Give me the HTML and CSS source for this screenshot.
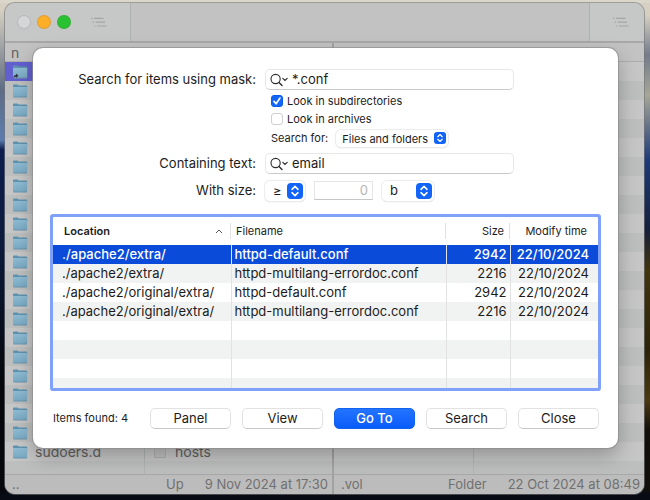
FILE: index.html
```html
<!DOCTYPE html>
<html lang="en">
<head>
<meta charset="utf-8">
<title>Find files</title>
<link rel="stylesheet" href="styles.css">
</head>
<body>
<svg class="defs" aria-hidden="true">
  <defs>
    <linearGradient id="fold" x1="0" y1="0" x2="0" y2="1"><stop offset="0" stop-color="#8fbcd3"/><stop offset="1" stop-color="#78a9c3"/></linearGradient>
    <symbol id="folder" viewBox="0 0 16 14">
      <path d="M1 1.2Q1 .4 1.8 .4H5.2Q5.8 .4 6.3 1L6.8 1.6H14.3Q15.2 1.6 15.2 2.5V5H1Z" fill="#5f93b0"/>
      <path d="M1 3H15.2V12.2Q15.2 13.2 14.2 13.2H2Q1 13.2 1 12.2Z" fill="url(#fold)"/>
      <path d="M1.3 13H15" stroke="#6790a6" stroke-width=".7"/>
    </symbol>
    <symbol id="lines" viewBox="0 0 16 11">
      <g stroke="#a3a5a5" stroke-width="1.2"><path d="M0 1.4H1.4M3 1.4H12.6M1.6 5.2H3M4.6 5.2H14M3 9H4.4M6 9H15.6"/></g>
    </symbol>
    <symbol id="loupe" viewBox="0 0 20 14">
      <g fill="none" stroke="#2c2c2c" stroke-linecap="round"><circle cx="5.6" cy="6" r="4.6" stroke-width="1.1"/><path d="M9 9.4 12 12.4" stroke-width="1.4"/><path d="M12.8 5.4 15 7.4 17.2 5.4" stroke-width="1.2"/></g>
    </symbol>
    <symbol id="stepper" viewBox="0 0 16 16">
      <rect width="16" height="16" rx="4" fill="#1263f8"/>
      <path d="M5 6.3 8 3.4 11 6.3M5 9.7 8 12.6 11 9.7" fill="none" stroke="#fff" stroke-width="1.6" stroke-linecap="round" stroke-linejoin="round"/>
    </symbol>
  </defs>
</svg>

<main class="window">
  <header class="toolbar">
    <div class="tool-left">
      <span class="light"></span><span class="light amber"></span><span class="light green"></span>
      <svg class="lines"><use href="#lines"/></svg>
    </div>
    <div class="tool-right"><svg class="lines"><use href="#lines"/></svg></div>
  </header>
  <div class="panels">
    <section class="panel">
      <div class="panel-head"><span>n</span></div>
      <div class="listing">
        <ul class="files">
          <li class="current"><svg class="folder"><use href="#folder"/><path d="M1.5 13Q1.5 10 4 10V8.5L6.5 10.8 4 13V11.7Q2.5 11.7 1.5 13Z" fill="#334"/></svg></li>
          <li><svg class="folder"><use href="#folder"/></svg></li><li><svg class="folder"><use href="#folder"/></svg></li><li><svg class="folder"><use href="#folder"/></svg></li><li><svg class="folder"><use href="#folder"/></svg></li><li><svg class="folder"><use href="#folder"/></svg></li><li><svg class="folder"><use href="#folder"/></svg></li><li><svg class="folder"><use href="#folder"/></svg></li><li><svg class="folder"><use href="#folder"/></svg></li><li><svg class="folder"><use href="#folder"/></svg></li><li><svg class="folder"><use href="#folder"/></svg></li><li><svg class="folder"><use href="#folder"/></svg></li><li><svg class="folder"><use href="#folder"/></svg></li><li><svg class="folder"><use href="#folder"/></svg></li><li><svg class="folder"><use href="#folder"/></svg></li><li><svg class="folder"><use href="#folder"/></svg></li><li><svg class="folder"><use href="#folder"/></svg></li><li><svg class="folder"><use href="#folder"/></svg></li><li><svg class="folder"><use href="#folder"/></svg></li><li><svg class="folder"><use href="#folder"/></svg></li>
          <li><svg class="folder"><use href="#folder"/></svg>sudoers.d</li>
        </ul>
        <ul class="files last">
          <li><span class="doc"></span>hosts</li>
        </ul>
      </div>
      <footer class="status"><span class="grow">..</span><span>Up</span><span>9 Nov 2024 at 17:30</span></footer>
    </section>
    <section class="panel">
      <div class="panel-head"></div>
      <div class="listing"><ul class="files"></ul><ul class="files last"></ul></div>
      <footer class="status"><span class="grow">.vol</span><span>Folder</span><span>22 Oct 2024 at 08:49</span></footer>
    </section>
  </div>
</main>

<div class="dialog" role="dialog" aria-label="Find files">
  <form class="form">
    <label for="mask">Search for items using mask:</label>
    <div class="search"><svg class="loupe"><use href="#loupe"/></svg><input id="mask" type="text" value="*.conf"></div>
    <div class="options">
      <label class="check"><input type="checkbox" checked><span>Look in subdirectories</span></label>
      <label class="check"><input type="checkbox"><span>Look in archives</span></label>
      <div class="kind"><label for="kind">Search for:</label>
        <div class="pick small"><select id="kind"><option>Files and folders</option></select><svg viewBox="0 0 16 16"><use href="#stepper"/></svg></div></div>
    </div>
    <label for="text">Containing text:</label>
    <div class="search"><svg class="loupe"><use href="#loupe"/></svg><input id="text" type="text" value="email"></div>
    <label for="size">With size:</label>
    <div class="sizes">
      <div class="pick compare"><select aria-label="Comparison"><option>≥</option></select><svg viewBox="0 0 16 16"><use href="#stepper"/></svg></div>
      <input class="number" id="size" type="text" placeholder="0">
      <div class="pick unit"><select aria-label="Unit"><option>b</option></select><svg viewBox="0 0 16 16"><use href="#stepper"/></svg></div>
    </div>
  </form>

  <div class="results">
    <table>
      <colgroup><col class="c-location"><col class="c-name"><col class="c-size"><col class="c-time"></colgroup>
      <thead><tr>
        <th class="sorted"><div>Location<svg class="caret" viewBox="0 0 8 5"><path d="M1 4 4 1 7 4" fill="none" stroke="#555"/></svg></div></th>
        <th><div>Filename</div></th><th class="num"><div>Size</div></th><th class="num"><div>Modify time</div></th>
      </tr></thead>
      <tbody>
        <tr class="selected"><td>./apache2/extra/</td><td>httpd-default.conf</td><td>2942</td><td>22/10/2024</td></tr>
        <tr><td>./apache2/extra/</td><td>httpd-multilang-errordoc.conf</td><td>2216</td><td>22/10/2024</td></tr>
        <tr><td>./apache2/original/extra/</td><td>httpd-default.conf</td><td>2942</td><td>22/10/2024</td></tr>
        <tr><td>./apache2/original/extra/</td><td>httpd-multilang-errordoc.conf</td><td>2216</td><td>22/10/2024</td></tr>
        <tr><td></td><td></td><td></td><td></td></tr>
        <tr><td></td><td></td><td></td><td></td></tr>
        <tr><td></td><td></td><td></td><td></td></tr>
        <tr class="partial"><td></td><td></td><td></td><td></td></tr>
      </tbody>
    </table>
  </div>

  <div class="actions">
    <span class="found">Items found: 4</span>
    <button type="button">Panel</button>
    <button type="button">View</button>
    <button type="button" class="primary">Go To</button>
    <button type="button">Search</button>
    <button type="button">Close</button>
  </div>
</div>
</body>
</html>
```

FILE: styles.css
```css
* { box-sizing: border-box; }

body {
  margin: 0;
  min-height: 100vh;
  padding: 3px 6px 6px 5px;
  display: flex;
  flex-direction: column;
  font: 13px/19px Inter, "Liberation Sans", sans-serif;
  color: #1c1c1c;
  background:
    linear-gradient(#dad6ca 0 3px, transparent 3px),
    linear-gradient(transparent 490px, #080b13 494px),
    linear-gradient(#d5d0c2 10px, #8d929a 60px, #5e6d85 90px, #5c7caf 140px, #0c1c4e 150px, #0c1c3e 240px, #05070d 380px) left / 10px 100% no-repeat,
    linear-gradient(#d5d0c2 15px, #747b8b 55px, #a6a797 95px, #1e3a78 160px, #15203a 230px, #41350f 270px, #2b2408 350px, #4b3a12 400px, #120f0a 430px) right / 10px 100% no-repeat,
    linear-gradient(#dad6ca 50%, #080b13 50%);
}

ul { list-style: none; margin: 0; padding: 0; }
svg { display: block; flex: none; }
.defs { position: absolute; width: 0; height: 0; }

/* File manager window behind the sheet */
.window {
  flex: 1;
  display: flex;
  flex-direction: column;
  border-radius: 10px;
  overflow: hidden;
  background: #c1c1c1;
  box-shadow: 0 0 0 1px #73747699;
  color: #606060;
  font-size: 14px;
}
.toolbar {
  display: flex;
  justify-content: space-between;
  height: 40px;
  background: #c2c2c2;
  border-bottom: 2px solid #a8a8a8;
}
.tool-left, .tool-right { display: flex; align-items: center; background: #c5c8c7; }
.tool-left { gap: 8px; width: 126px; padding-left: 13px; border-right: 1px solid #b2b2b2; }
.tool-right { width: 55px; padding-left: 23px; border-left: 1px solid #b2b2b2; }
.light { width: 12px; height: 12px; border-radius: 50%; background: #d5d6d8; box-shadow: 0 0 0 1px #b8b9ba; }
.amber { background: #fdae27; box-shadow: 0 0 0 1px #e2a034; }
.green { background: #29c232; box-shadow: 0 0 0 1px #32ad38; }
.lines { width: 16px; height: 11px; }
.tool-left .lines { margin-left: 13px; }

.panels { flex: 1; display: grid; grid-template-columns: 327px 1fr; }
.panel { display: flex; flex-direction: column; }
.panel + .panel { border-left: 2px solid #a2a2a2; }
.panel-head { height: 19px; padding-left: 6px; background: #c3c3c3; border-bottom: 1px solid #adadad; }
.listing {
  flex: 1;
  display: grid;
  grid-template-columns: 139px 1fr;
  background: repeating-linear-gradient(#c6c6c6 0 19px, #bcbfbe 19px 38px);
}
.files { display: flex; flex-direction: column; }
.files li { display: flex; align-items: center; gap: 7px; height: 19px; padding-left: 7px; }
.files + .files { border-left: 1px solid #b2b4b4; }
.last { justify-content: flex-end; padding-bottom: 13px; }
.last li { gap: 9px; padding-left: 9px; }
.current { background: #625fcf; }
.folder { width: 16px; height: 14px; }
.doc { width: 12px; height: 12px; background: #c0c0c0; border: 1px solid #b0b0b0; }
.status {
  display: flex;
  gap: 21px;
  height: 20px;
  padding: 0 4px 0 7px;
  background: #bcbcbc;
  border-top: 1px solid #a8a8a8;
  color: #707070;
  font-size: 13px;
}
.grow { flex: 1; }

/* Search sheet */
.dialog {
  position: absolute;
  top: 48px;
  left: 33px;
  right: 32px;
  padding: 21px 19px 19px 20px;
  border-radius: 10px;
  background: #fff;
  box-shadow: 0 0 0 1px #8c8c8caa, 0 8px 20px #0004;
}
.form {
  display: grid;
  grid-template-columns: 203px 249px;
  column-gap: 9px;
  align-items: center;
}
.form > label { text-align: right; line-height: 21px; }
.search {
  display: flex;
  align-items: center;
  gap: 2px;
  height: 21px;
  padding-left: 4px;
  border: 1px solid #e8e8e8;
  border-bottom-color: #cacaca;
  border-radius: 5px;
}
.loupe { width: 20px; height: 14px; }
input, select, button { font: inherit; color: inherit; margin: 0; }
.search input { flex: 1; min-width: 0; padding: 0; border: 0; outline: 0; background: none; }

.options { grid-column: 2; padding: 2px 0 6px 6px; font-size: 11px; line-height: 18px; }
.check { display: flex; align-items: center; gap: 4px; height: 18px; }
.check input {
  appearance: none;
  width: 12px;
  height: 12px;
  border: 1px solid #cfcfcf;
  border-radius: 3px;
  background: #fff;
}
.check input:checked {
  border-color: #0a5cf0;
  background: #1466fa url("data:image/svg+xml,%3Csvg xmlns='http://www.w3.org/2000/svg' viewBox='0 0 10 10'%3E%3Cpath d='M2 5.4 4.1 7.8 8 2' fill='none' stroke='white' stroke-width='1.6' stroke-linecap='round' stroke-linejoin='round'/%3E%3C/svg%3E");
}
.kind { display: flex; align-items: center; gap: 8px; padding-top: 1px; }

.pick { position: relative; height: 20px; }
.pick select {
  appearance: none;
  width: 100%;
  height: 100%;
  padding: 0 0 0 8px;
  border: 0;
  border-radius: 5px;
  background: #fff;
  box-shadow: 0 0 0 1px #ececec, 0 1px 1px #bbb;
}
.pick svg { position: absolute; top: 2px; right: 2px; width: 16px; height: 16px; pointer-events: none; }
.pick.small { width: 112px; height: 17px; }
.pick.small select { padding-left: 6px; }
.pick.small svg { width: 12px; height: 12px; }
.sizes { display: flex; align-items: center; gap: 9px; padding-top: 6px; }
.form > label:last-of-type { padding-top: 6px; }
.compare { width: 40px; }
.unit { width: 52px; }
.number {
  width: 59px;
  height: 19px;
  padding: 0 4px;
  border: 1px solid #e6e6e6;
  border-bottom-color: #c6c6c6;
  text-align: right;
}
.number::placeholder { color: #b5b5b5; }

.results { margin: 16px 1px 0 0; border-radius: 1px; box-shadow: 0 0 0 3px #7fa1f9; }
table { width: 100%; table-layout: fixed; border-collapse: collapse; }
.c-location { width: 178px; }
.c-name { width: 215px; }
.c-size { width: 64px; }
th { height: 28px; padding: 0; font-size: 11px; font-weight: 400; text-align: left; }
th div {
  display: flex;
  align-items: center;
  height: 16px;
  padding: 0 5px;
  border-right: 1px solid #e2e2e2;
}
th:last-child div { border: 0; }
.sorted div { justify-content: space-between; padding-left: 11px; padding-right: 7px; font-weight: 600; }
.caret { width: 8px; height: 5px; }
.num div { justify-content: flex-end; }
th:last-child div { padding-right: 11px; }
td { height: 19px; padding: 0 3px; line-height: 19px; white-space: nowrap; border-right: 1px solid #e2e2e2; }
td:first-child { padding-left: 9px; }
td:nth-child(n+3) { text-align: right; }
td:last-child { border: 0; padding-right: 9px; }
tbody tr:nth-child(even) { background: #f1f3f2; }
.selected { background: #0a4bd9; color: #fff; font-weight: 500; }
.partial td { height: 10px; }

.actions { display: flex; align-items: center; gap: 11px; margin-top: 20px; }
.found { flex: 1; font-size: 11px; white-space: nowrap; }
button {
  width: 81px;
  height: 21px;
  padding: 0;
  border: 1px solid #e2e2e2;
  border-bottom-color: #c8c8c8;
  border-radius: 5px;
  background: #fff;
}
.primary { border-color: #1263ee; background: linear-gradient(#2374ff, #0a5cfa); color: #fff; font-weight: 500; }
```
